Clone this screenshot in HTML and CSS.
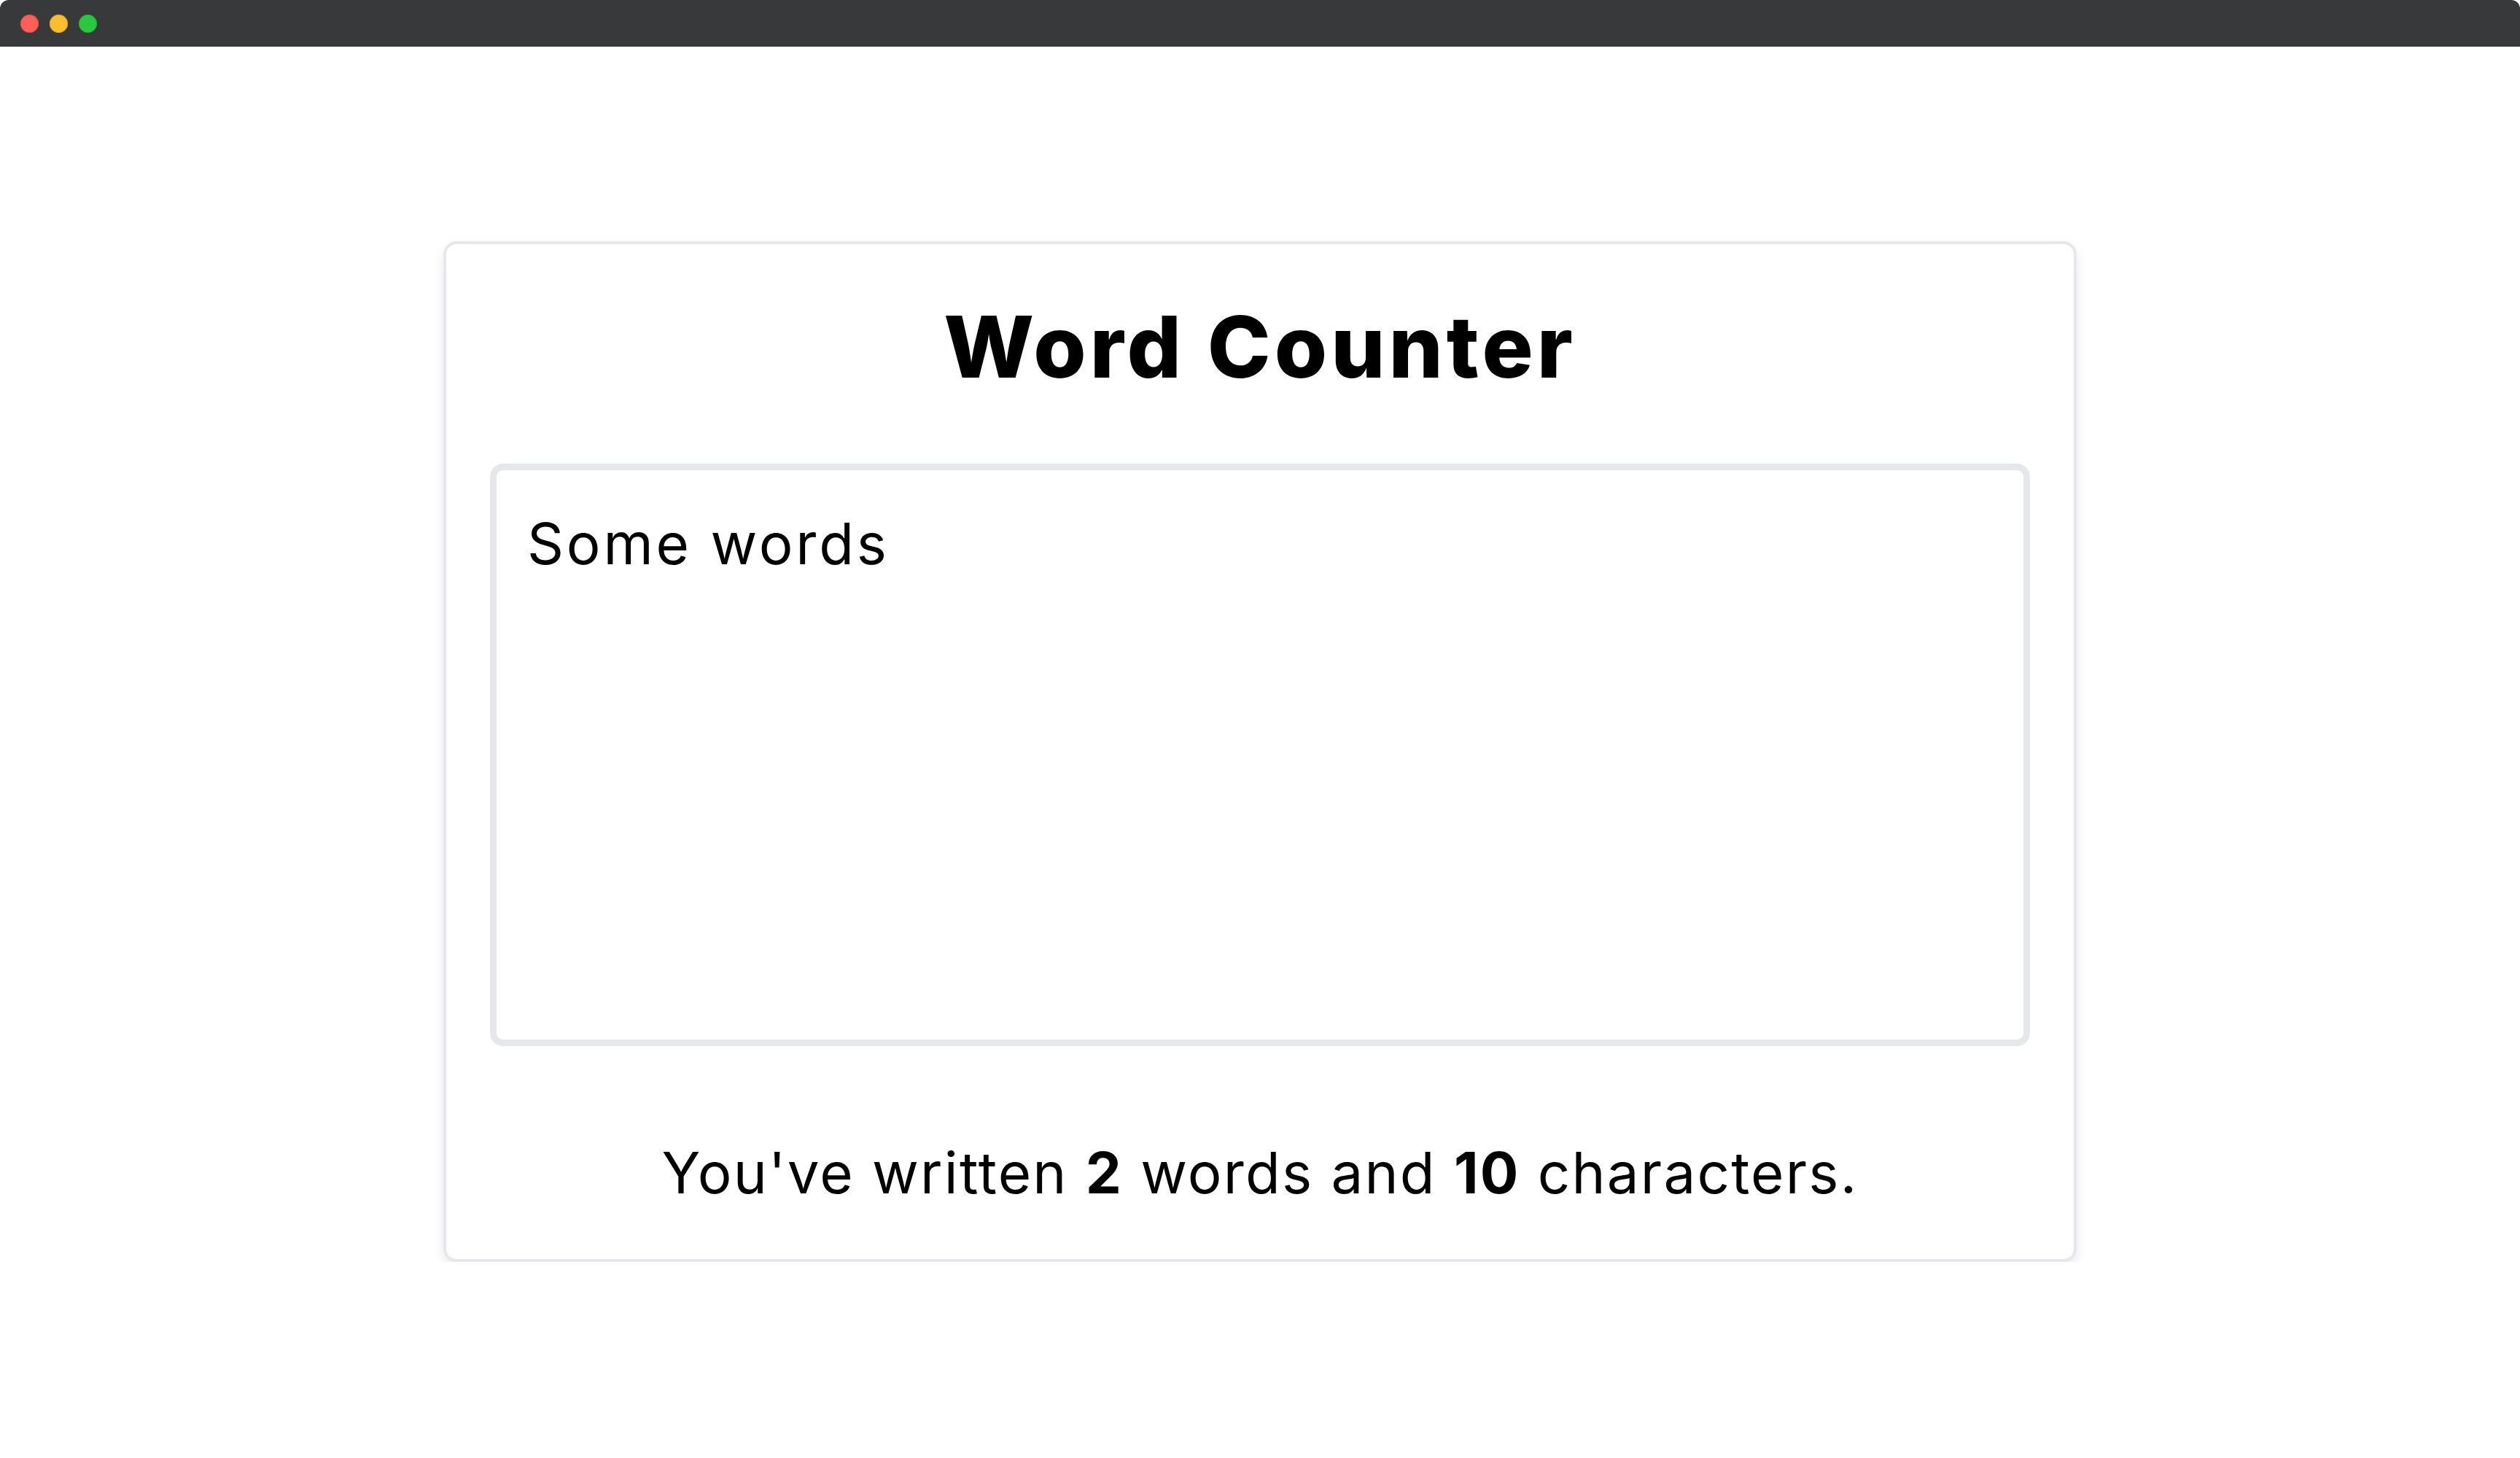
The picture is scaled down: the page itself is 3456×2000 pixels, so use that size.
FILE: index.html
```html
<!DOCTYPE html>
<html lang="en">
<head>
<meta charset="utf-8">
<title>Word Counter</title>
<link rel="stylesheet" href="styles.css">
</head>
<body>
<div class="titlebar">
  <span class="dot dot-red"></span>
  <span class="dot dot-yellow"></span>
  <span class="dot dot-green"></span>
</div>
<main class="page">
  <section class="card">
    <h1 class="title">Word Counter</h1>
    <textarea class="editor">Some words</textarea>
    <p class="summary">You've written <strong>2</strong> words and <strong>10</strong> characters.</p>
  </section>
</main>
</body>
</html>
```

FILE: styles.css
```css
* { box-sizing: border-box; }
html, body {
  margin: 0;
  padding: 0;
  background: #ffffff;
  font-family: "Inter", "Noto Sans", sans-serif;
  color: #000;
}
.titlebar {
  height: 64px;
  background: #38393b;
  border-radius: 12px 12px 0 0;
  display: flex;
  align-items: center;
  gap: 15px;
  padding-left: 28px;
}
.dot {
  width: 25px;
  height: 25px;
  border-radius: 50%;
  display: block;
}
.dot-red { background: #ff5f57; box-shadow: inset 0 0 0 1px #e0443e; }
.dot-yellow { background: #febc2e; box-shadow: inset 0 0 0 1px #dea123; }
.dot-green { background: #28c840; box-shadow: inset 0 0 0 1px #1aab29; }
.page {
  padding-top: 267px;
  display: flex;
  justify-content: center;
}
.card {
  width: 2240px;
  border: 4px solid #e5e7eb;
  border-radius: 18px;
  background: #fff;
  padding: 82px 60px 60px;
  box-shadow: 0 12px 18px -3px rgba(0,0,0,0.08), 0 2px 20px rgba(0,0,0,0.04);
  display: flex;
  flex-direction: column;
}
.title {
  margin: 0;
  font-size: 117px;
  line-height: 117px;
  font-weight: 800;
  text-align: center;
  letter-spacing: 5px;
}
.editor {
  display: block;
  margin-top: 102px;
  width: 100%;
  height: 799px;
  border: 9px solid #e5e7eb;
  border-radius: 18px;
  padding: 42px 42px;
  font-family: "Inter", "Noto Sans", sans-serif;
  font-size: 78px;
  line-height: 117px;
  letter-spacing: 3.8px;
  color: #000;
  resize: none;
  outline: none;
  background: #fff;
}
.summary {
  margin: 115px 0 0;
  font-size: 78px;
  line-height: 117px;
  letter-spacing: 2.2px;
  text-align: center;
}
.summary strong { font-weight: 700; }
```
